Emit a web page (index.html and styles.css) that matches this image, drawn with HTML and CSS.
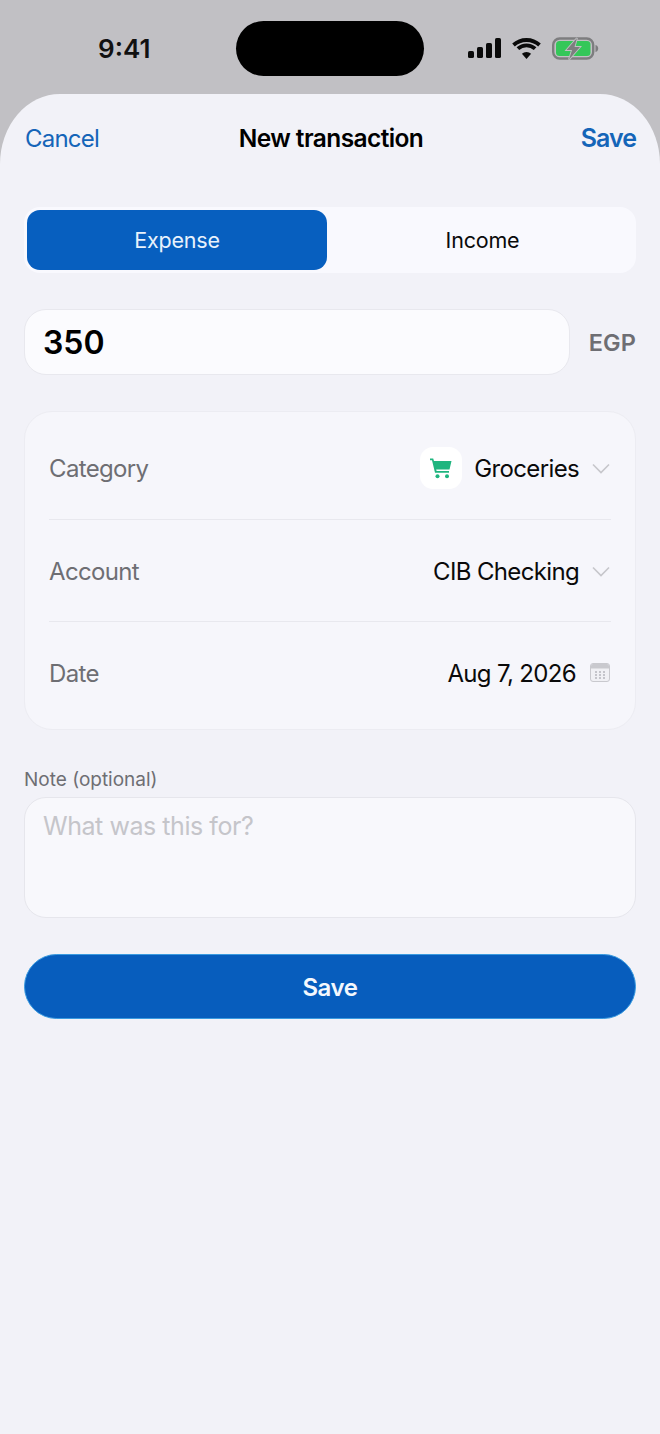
FILE: index.html
```html
<!DOCTYPE html>
<html lang="en">
<head>
<meta charset="utf-8">
<title>New transaction</title>
<link rel="stylesheet" href="styles.css">
</head>
<body>
<div class="screen">
  <div class="status">
    <span class="time">9:41</span>
    <div class="island"></div>
    <div class="status-icons">
      <svg class="ic-signal" width="33" height="20" viewBox="0 0 33 20"><rect x="0" y="13" width="6" height="7" rx="1.6"/><rect x="9" y="9" width="6" height="11" rx="1.6"/><rect x="18" y="5" width="6" height="15" rx="1.6"/><rect x="27" y="0" width="6" height="20" rx="1.6"/></svg>
      <svg class="ic-wifi" width="29" height="21" viewBox="0 0 29 21"><path d="M14.500 21l-4.600-5.200a6.600 6.600 0 0 1 9.200 0z"/><path d="M14.500 5.400a15 15 0 0 1 9.900 3.800l-2.600 2.900a11 11 0 0 0-14.600 0L4.600 9.200a15 15 0 0 1 9.900-3.800z"/><path d="M14.500 0a21 21 0 0 1 14.300 5.600l-2.600 2.900a17.200 17.200 0 0 0-23.400 0L.2 5.600A21 21 0 0 1 14.500 0z"/></svg>
      <svg class="ic-battery" width="47" height="23" viewBox="0 0 47 23"><rect x="1.200" y="1.500" width="40" height="20" rx="6.500" fill="none" stroke="#7d7d7f" stroke-width="2.400"/><rect x="4" y="4" width="34.500" height="15" rx="3.500" fill="#34c759"/><path d="M43.500 8v7c1.800-.5 2.700-1.900 2.700-3.500S45.300 8.500 43.500 8z" fill="#7d7d7f"/><path d="M25 1L14.500 13h5.500l-3 9.500L28 10h-5.500z" fill="#7d7d7f" stroke="#c1c0c4" stroke-width="1.800" paint-order="stroke"/></svg>
    </div>
  </div>

  <main class="sheet">
    <header class="nav">
      <span class="nav-link">Cancel</span>
      <h1 class="nav-title">New transaction</h1>
      <span class="nav-link nav-save">Save</span>
    </header>

    <div class="segment">
      <div class="seg-item seg-on">Expense</div>
      <div class="seg-item seg-off">Income</div>
    </div>

    <div class="amount-row">
      <div class="amount">350</div>
      <span class="currency">EGP</span>
    </div>

    <section class="card">
      <div class="row">
        <span class="row-label">Category</span>
        <div class="row-value">
          <span class="cat-icon">
            <svg width="24" height="22" viewBox="0 0 24 22"><path d="M1 1.500h3.200l.8 2.500h17.500l-2 8.500H7.200l.4 1.500h12.400v1.800H6L3 3.300H1z" fill="#1fb57f"/><circle cx="8.500" cy="19.300" r="2" fill="#1fb57f"/><circle cx="18" cy="19.300" r="2" fill="#1fb57f"/></svg>
          </span>
          <span>Groceries</span>
          <svg class="chev" width="18" height="11" viewBox="0 0 18 11"><path d="M1 1.500l8 8 8-8" fill="none" stroke="#c6c6cb" stroke-width="1.600"/></svg>
        </div>
      </div>
      <div class="row">
        <span class="row-label">Account</span>
        <div class="row-value">
          <span>CIB Checking</span>
          <svg class="chev" width="18" height="11" viewBox="0 0 18 11"><path d="M1 1.500l8 8 8-8" fill="none" stroke="#c6c6cb" stroke-width="1.600"/></svg>
        </div>
      </div>
      <div class="row">
        <span class="row-label">Date</span>
        <div class="row-value">
          <span>Aug 7, 2026</span>
          <svg class="cal" width="20" height="19" viewBox="0 0 20 19"><rect x=".5" y=".5" width="19" height="18" rx="2.500" fill="#f0f0f4" stroke="#c9c9ce"/><path d="M1 5.500V3a2 2 0 0 1 2-2h14a2 2 0 0 1 2 2v2.500z" fill="#c9c9ce"/><g fill="#c4c4ca"><rect x="5" y="8" width="2" height="2"/><rect x="9" y="8" width="2" height="2"/><rect x="13" y="8" width="2" height="2"/><rect x="5" y="11" width="2" height="2"/><rect x="9" y="11" width="2" height="2"/><rect x="13" y="11" width="2" height="2"/><rect x="5" y="14" width="2" height="2"/><rect x="9" y="14" width="2" height="2"/><rect x="13" y="14" width="2" height="2"/></g></svg>
        </div>
      </div>
    </section>

    <label class="note-label">Note (optional)</label>
    <div class="note">What was this for?</div>

    <div class="save-btn">Save</div>
  </main>
</div>
</body>
</html>
```
FILE: styles.css
```css
* { box-sizing: border-box; }

html, body {
  margin: 0;
  padding: 0;
}

body {
  width: 660px;
  height: 1434px;
  overflow: hidden;
  background: #c1c0c4;
  font-family: Inter, "Liberation Sans", sans-serif;
  color: #000;
}

.screen {
  display: flex;
  flex-direction: column;
  height: 1434px;
}

/* Status bar */
.status {
  height: 94px;
  flex: none;
  display: flex;
  align-items: flex-start;
  padding-top: 21px;
  background: #c1c0c4;
}

.time {
  width: 236px;
  padding: 14px 0 0 98px;
  font-size: 26px;
  line-height: 28px;
  font-weight: 600;
  color: #111;
}

.island {
  width: 188px;
  height: 55px;
  border-radius: 28px;
  background: #000;
  flex: none;
}

.status-icons {
  display: flex;
  align-items: center;
  height: 20px;
  margin: 17px 0 0 44px;
}

.ic-signal { fill: #0a0a0a; }
.ic-wifi { fill: #0a0a0a; margin-left: 11px; }
.ic-battery { margin-left: 11px; }

/* Sheet */
.sheet {
  flex: 1;
  background: #f2f2f8;
  border-radius: 60px 60px 0 0 / 70px 70px 0 0;
  padding: 0 24px;
  display: flex;
  flex-direction: column;
}

.nav {
  height: 113px;
  flex: none;
  display: grid;
  grid-template-columns: 1fr auto 1fr;
  align-items: start;
  padding-top: 28px;
}

.nav-link {
  font-size: 24px;
  line-height: 32px;
  letter-spacing: -0.8px;
  color: #1565b8;
  padding: 1px 0 0 1px;
}

.nav-save {
  justify-self: end;
  font-size: 25px;
  font-weight: 600;
  letter-spacing: -1px;
  padding: 0;
}

.nav-title {
  margin: 0 0 0 2px;
  font-size: 24.500px;
  line-height: 32px;
  font-weight: 600;
  letter-spacing: -0.6px;
  color: #000;
}

/* Expense / income switch */
.segment {
  height: 66px;
  flex: none;
  display: flex;
  padding: 3px;
  border-radius: 16px;
  background: #f9f9fe;
}

.seg-item {
  display: flex;
  align-items: center;
  justify-content: center;
  font-size: 21.500px;
  letter-spacing: -0.2px;
  color: #0a0a0a;
  border-radius: 13px;
}

.seg-on {
  width: 300px;
  background: #075fbf;
  color: #e8f2fc;
}

.seg-off {
  flex: 1;
  padding-left: 5px;
}

/* Amount */
.amount-row {
  margin-top: 36px;
  height: 66px;
  flex: none;
  display: flex;
  align-items: center;
  justify-content: space-between;
}

.amount {
  width: 546px;
  height: 66px;
  display: flex;
  align-items: center;
  padding-left: 18px;
  font-size: 32px;
  font-weight: 600;
  color: #000;
  background: #fbfbfe;
  border: 1px solid #e8e8ee;
  border-radius: 22px;
}

.currency {
  padding-top: 1px;
  font-size: 23.500px;
  font-weight: 600;
  color: #6e6e73;
  letter-spacing: 0.1px;
}

/* Detail rows */
.card {
  margin-top: 36px;
  height: 319px;
  flex: none;
  padding: 0 24px;
  background: #f6f6fb;
  border: 1px solid #ececf2;
  border-radius: 28px;
  display: flex;
  flex-direction: column;
}

.row {
  height: 102px;
  flex: none;
  display: flex;
  align-items: center;
  justify-content: space-between;
  padding-top: 2px;
  border-top: 1px solid #e8e8ee;
  font-size: 24px;
  letter-spacing: -0.65px;
}

.row:first-child {
  height: 107px;
  border-top: 0;
  padding-top: 6px;
}

.row-label {
  color: #6e6e73;
}

.row-value {
  display: flex;
  align-items: center;
  color: #0a0a0a;
}

.cat-icon {
  width: 42px;
  height: 42px;
  margin: 0 12px 2px 0;
  border-radius: 13px;
  background: #fff;
  display: flex;
  align-items: center;
  justify-content: center;
}

.chev {
  margin: 0 1px 0 13px;
}

.cal {
  margin: 0 1px 2px 14px;
}

/* Note */
.note-label {
  margin-top: 38px;
  font-size: 19px;
  line-height: 23px;
  color: #6e6e73;
}

.note {
  margin-top: 6px;
  height: 121px;
  flex: none;
  padding: 13px 18px;
  font-size: 25px;
  line-height: 30px;
  letter-spacing: -0.45px;
  color: #c5c5ca;
  background: #f8f8fc;
  border: 1px solid #e6e6ec;
  border-radius: 22px;
}

/* Primary action */
.save-btn {
  margin-top: 36px;
  height: 65px;
  flex: none;
  display: flex;
  align-items: center;
  justify-content: center;
  padding-top: 1px;
  font-size: 24px;
  font-weight: 600;
  letter-spacing: -0.4px;
  color: #f4f8fd;
  background: #075dbd;
  border: 1px solid #3a9be0;
  border-radius: 33px;
}
```
